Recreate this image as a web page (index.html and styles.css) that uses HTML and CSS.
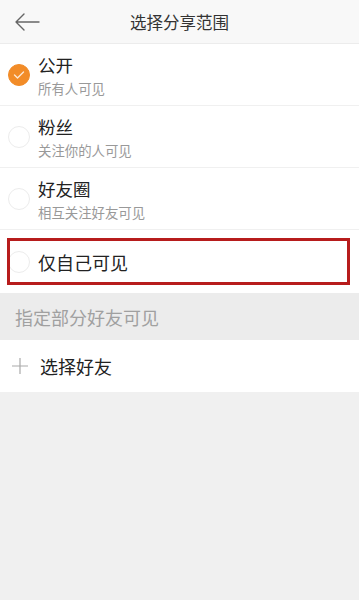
FILE: index.html
```html
<!DOCTYPE html>
<html lang="zh">
<head>
<meta charset="utf-8">
<link rel="stylesheet" href="styles.css">
</head>
<body>
<header class="bar">
  <svg class="back" width="26" height="18" viewBox="0 0 26 18"><path d="M25 9H2M10 1L2 9l8 8" fill="none" stroke="#666" stroke-width="1.4" stroke-linecap="round" stroke-linejoin="round"/></svg>
  <h1 class="title">选择分享范围</h1>
</header>
<ul class="list">
  <li class="row">
    <span class="radio on"><svg width="12" height="10" viewBox="0 0 12 10"><path d="M1.5 5l3 3 6-6" fill="none" stroke="#fff" stroke-width="1.4" stroke-linecap="round" stroke-linejoin="round" opacity="0.8"/></svg></span>
    <div class="txt"><div class="name">公开</div><div class="desc">所有人可见</div></div>
  </li>
  <li class="row">
    <span class="radio"></span>
    <div class="txt"><div class="name">粉丝</div><div class="desc">关注你的人可见</div></div>
  </li>
  <li class="row">
    <span class="radio"></span>
    <div class="txt"><div class="name">好友圈</div><div class="desc">相互关注好友可见</div></div>
  </li>
  <li class="row single">
    <span class="radio"></span>
    <div class="txt"><div class="name big">仅自己可见</div></div>
    <span class="mark"></span>
  </li>
</ul>
<div class="section">指定部分好友可见</div>
<div class="pick">
  <svg class="plus" width="16" height="16" viewBox="0 0 16 16"><path d="M8 0v16M0 8h16" stroke="#aaa" stroke-width="1.2"/></svg>
  <span class="pick-txt">选择好友</span>
</div>
</body>
</html>
```
FILE: styles.css
```css
* { box-sizing: border-box; }
html, body { margin: 0; padding: 0; }
body {
  width: 359px;
  height: 600px;
  background: #f0f0f0;
  font-family: "Noto Sans CJK SC", "Noto Sans", sans-serif;
  color: #222;
}
.bar {
  height: 44px;
  background: #f8f8f8;
  border-bottom: 1px solid #ececec;
  display: flex;
  align-items: center;
  position: relative;
}
.back { position: absolute; left: 14px; top: 13px; }
.title {
  flex: 1;
  margin: 0;
  text-align: center;
  font-size: 16.5px;
  font-weight: normal;
  color: #333;
}
.list { list-style: none; margin: 0; padding: 0; background: #fff; }
.row {
  height: 62px;
  display: flex;
  align-items: center;
  border-bottom: 1px solid #f0f0f0;
  position: relative;
}
.row.single { height: 63px; border-bottom: none; }
.radio {
  width: 22px;
  height: 22px;
  border-radius: 50%;
  border: 1px solid #ececec;
  margin-left: 8px;
  margin-right: 8px;
  flex: none;
  display: flex;
  align-items: center;
  justify-content: center;
}
.radio.on { background: #f28c28; border-color: #f28c28; }
.txt { display: flex; flex-direction: column; }
.name { font-size: 17.5px; line-height: 24px; color: #222; }
.name.big { font-size: 18px; }
.desc { font-size: 13.4px; line-height: 18px; color: #999; margin-top: 2px; }
.mark {
  position: absolute;
  left: 7px;
  top: 8px;
  width: 343px;
  height: 47px;
  border: 3.5px solid #b71c1c;
}
.section {
  height: 47px;
  background: #ececec;
  display: flex;
  align-items: center;
  padding-left: 15px;
  font-size: 18px;
  color: #a0a0a0;
}
.pick {
  height: 52px;
  background: #fff;
  display: flex;
  align-items: center;
  padding-left: 12px;
}
.plus { margin-right: 12px; }
.pick-txt { font-size: 18px; color: #222; }
```
